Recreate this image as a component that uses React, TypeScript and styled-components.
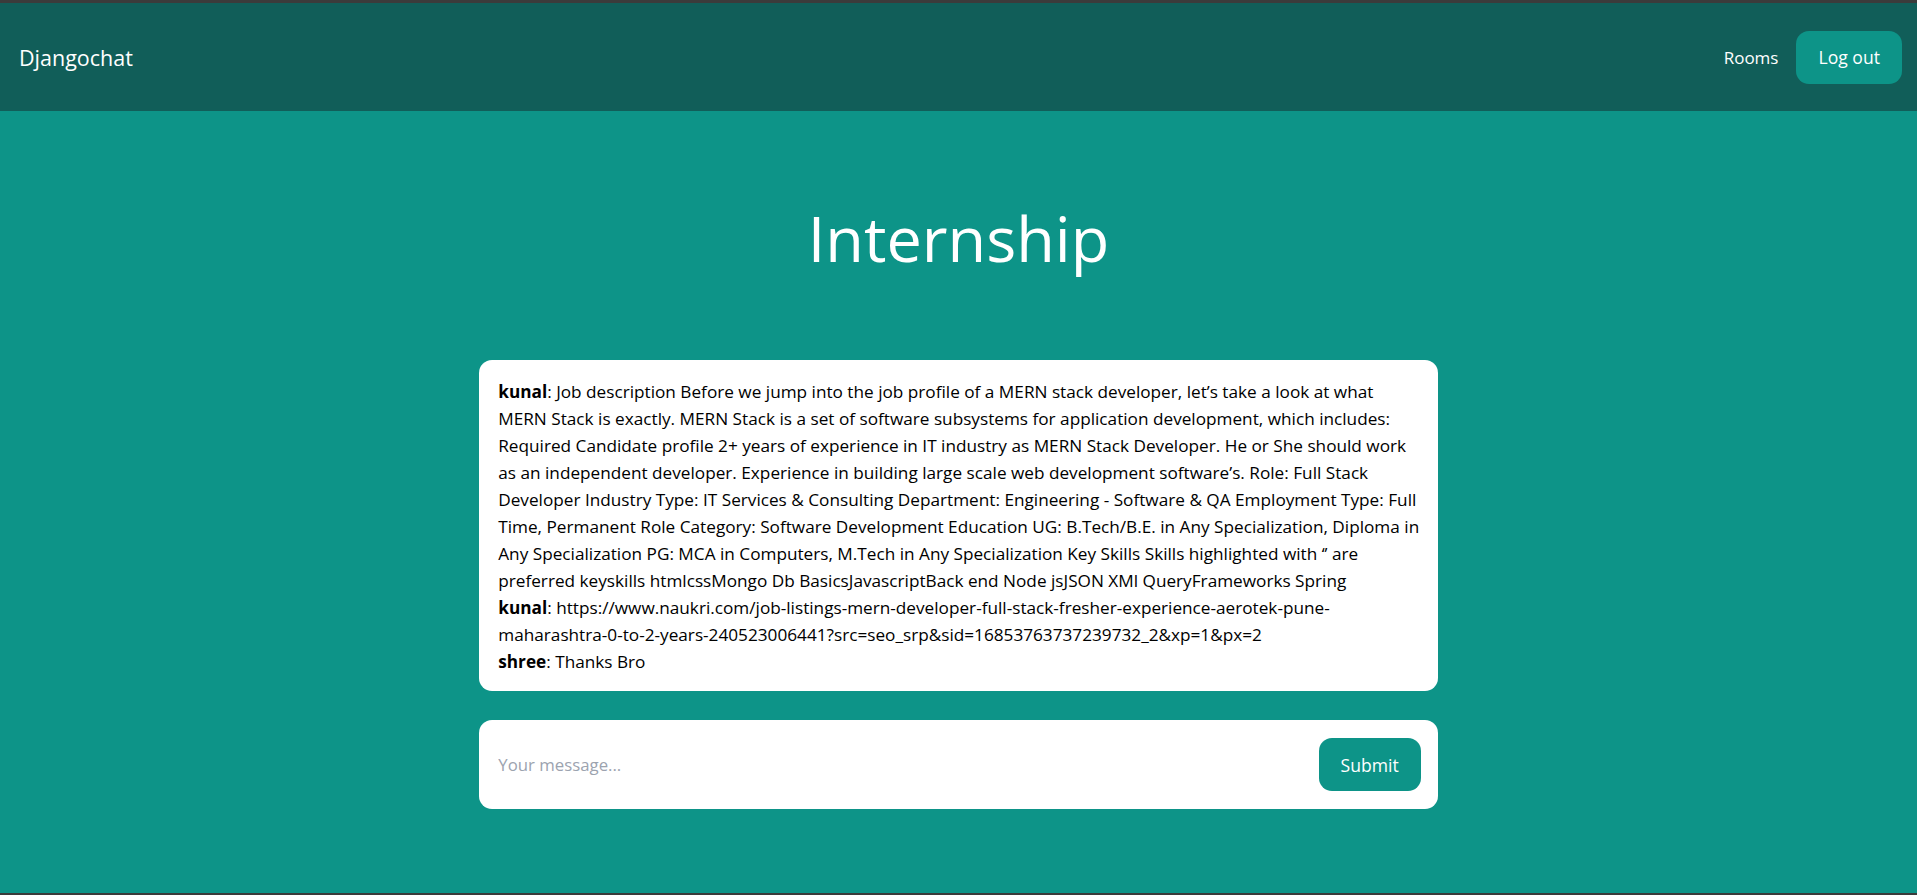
import React from 'react';
import styled, { createGlobalStyle } from 'styled-components';

const GlobalStyle = createGlobalStyle`
  html, body {
    margin: 0;
    padding: 0;
  }

  body {
    background-color: #0d9488;
    font-family: "Open Sans", "Noto Sans", sans-serif;
    color: #000;
  }
`;

const Page = styled.div`
  min-height: 100vh;
  box-sizing: border-box;
  border-top: 3px solid #3b3b3b;
  border-bottom: 2px solid #3b3b3b;
  display: flex;
  flex-direction: column;
`;

const Nav = styled.nav`
  height: 108px;
  box-sizing: border-box;
  background-color: #115e59;
  display: flex;
  align-items: center;
  justify-content: space-between;
  padding: 0 15px 0 19px;

  a {
    color: #fff;
    text-decoration: none;
  }
`;

const Brand = styled.a`
  font-size: 21.5px;
`;

const NavRight = styled.div`
  display: flex;
  align-items: center;
  gap: 18px;
`;

const NavLink = styled.a`
  font-size: 17px;
`;

const Button = styled.button`
  background-color: #0d9488;
  color: #fff;
  border: none;
  border-radius: 13px;
  padding: 0 22px;
  height: 53px;
  font-family: inherit;
  font-size: 17.6px;
  cursor: pointer;
`;

const Title = styled.h1`
  margin: 0;
  padding: 87px 0 82px;
  text-align: center;
  color: #fff;
  font-weight: 400;
  font-size: 63px;
  line-height: 80px;
`;

const Card = styled.div`
  width: 50%;
  margin: 0 auto;
  box-sizing: border-box;
  background-color: #fff;
  border-radius: 13px;
`;

const Messages = styled(Card)`
  padding: 18px 16px 16px 19px;
  font-size: 17.2px;
  line-height: 27px;
`;

const Message = styled.div`
  white-space: nowrap;

  b {
    font-weight: 700;
  }
`;

const Form = styled(Card)`
  margin-top: 29px;
  padding: 18px 17px 18px 19px;
  display: flex;
  align-items: center;
  gap: 16px;
`;

const Input = styled.input`
  flex: 1;
  padding: 0;
  border: none;
  outline: none;
  font-family: inherit;
  font-size: 16.8px;
  color: #111;

  &::placeholder {
    color: #9ca3af;
  }
`;

// lines kept as they wrap in the room view
const messages = [
  {
    user: 'kunal',
    lines: [
      'Job description Before we jump into the job profile of a MERN stack developer, let\u2019s take a look at what',
      'MERN Stack is exactly. MERN Stack is a set of software subsystems for application development, which includes:',
      'Required Candidate profile 2+ years of experience in IT industry as MERN Stack Developer. He or She should work',
      'as an independent developer. Experience in building large scale web development software\u2019s. Role: Full Stack',
      'Developer Industry Type: IT Services & Consulting Department: Engineering - Software & QA Employment Type: Full',
      'Time, Permanent Role Category: Software Development Education UG: B.Tech/B.E. in Any Specialization, Diploma in',
      'Any Specialization PG: MCA in Computers, M.Tech in Any Specialization Key Skills Skills highlighted with \u2018\u2019 are',
      'preferred keyskills htmlcssMongo Db BasicsJavascriptBack end Node jsJSON XMl QueryFrameworks Spring',
    ],
  },
  {
    user: 'kunal',
    lines: [
      'https://www.naukri.com/job-listings-mern-developer-full-stack-fresher-experience-aerotek-pune-',
      'maharashtra-0-to-2-years-240523006441?src=seo_srp&sid=16853763737239732_2&xp=1&px=2',
    ],
  },
  { user: 'shree', lines: ['Thanks Bro'] },
];

export default function App() {
  return (
    <Page>
      <GlobalStyle />
      <Nav>
        <Brand href="#">Djangochat</Brand>
        <NavRight>
          <NavLink href="#">Rooms</NavLink>
          <Button>Log out</Button>
        </NavRight>
      </Nav>
      <Title>Internship</Title>
      <Messages>
        {messages.map((m, i) => (
          <Message key={i}>
            <b>{m.user}</b>:{' '}
            {m.lines.map((line, j) => (
              <React.Fragment key={j}>
                {j > 0 && <br />}
                {line}
              </React.Fragment>
            ))}
          </Message>
        ))}
      </Messages>
      <Form as="form" onSubmit={(e: React.FormEvent) => e.preventDefault()}>
        <Input placeholder="Your message..." />
        <Button type="submit">Submit</Button>
      </Form>
    </Page>
  );
}
